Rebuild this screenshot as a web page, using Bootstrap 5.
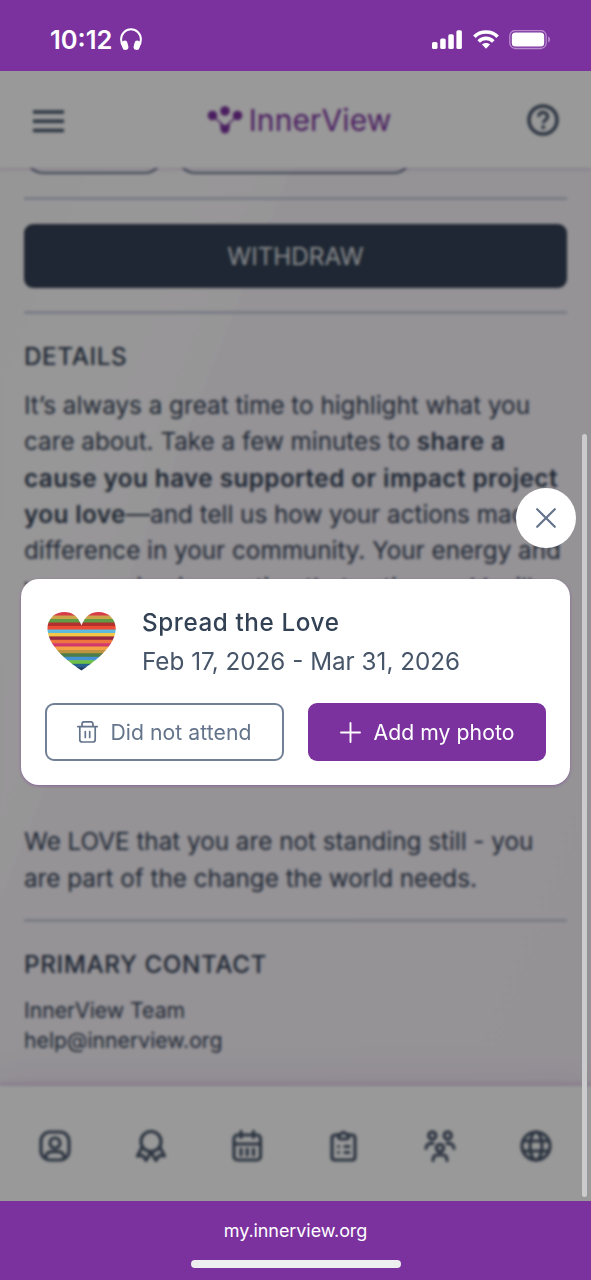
<!DOCTYPE html>
<html lang="en">
<head>
<meta charset="utf-8">
<meta name="viewport" content="width=device-width, initial-scale=1">
<title>InnerView</title>
<link href="https://cdn.jsdelivr.net/npm/bootstrap@5.3.0/dist/css/bootstrap.min.css" rel="stylesheet">
<style>
  body { font-family: Inter, "Liberation Sans", sans-serif; color: #334155; height: 1280px; font-size: 24.24px; line-height: 36.4px; letter-spacing: 0; overflow: hidden; }
  svg { display: block; flex: none; }
  .purple { background: #7b329f; color: #fff; }
  .status { height: 71px; padding: 8px 40px 0 50px; }
  .clock { font-size: 25.5px; font-weight: 600; padding-top: 1px; }
  .screen { height: 1130px; background: linear-gradient(111.7deg, #fbfafb 0, #fdfcfd 20%, #fcfafc 31.3%, #f9f5fb 32%, #f9f4fb 100%); }
  .topbar { height: 97px; padding: 2px 32px 0 33px; background: #fff; box-shadow: 0 1px 4px rgba(123,50,159,.25); z-index: 1; }
  .brand { color: #7b329f; font-size: 30px; letter-spacing: .1px; gap: 6px; margin: -1px 0 0 7px; }
  .chip { height: 44px; margin-top: -38px; border: 2px solid #64748b; border-radius: 20px; }
  .content { padding: 0 24px; }
  .rule { height: 3px; background: #cbd0df; }
  .withdraw { height: 64px; border-radius: 9px; background: #334155; color: #e2e5e9; border: 0; padding: 2px 0 0; }
  .title-sm { font-size: 24.24px; line-height: 36px; font-weight: 500; margin: 0; letter-spacing: .61px; }
  .copy b { font-weight: 600; letter-spacing: .45px; }
  .story { height: 436.4px; }
  .contact { font-size: 21.2px; line-height: 30.3px; }
  .tabs { height: 115px; padding: 5px 7px 0; background: #fff; box-shadow: 0 -2px 5px rgba(123,50,159,.2), 0 -12px 30px rgba(123,50,159,.08); }
  .tabs div { flex: 1; display: flex; justify-content: center; }
  .tabs svg { stroke: #475569; stroke-width: 3.2; fill: none; }
  .scrim { inset: 0; background: rgba(0,0,0,.4); backdrop-filter: blur(1.4px); z-index: 2; }
  .dialog-box { left: 21px; top: 508px; width: 549px; height: 206px; border-radius: 18px; background: #fff; z-index: 3; padding: 24px; box-shadow: 0 1px 3px rgba(123,50,159,.5); }
  .dismiss { width: 60.500px; height: 60.500px; right: -6px; top: -91.500px; border: 0; }
  .dates { color: #475569; }
  .act { height: 58px; border-radius: 9px; font-size: 21.2px; letter-spacing: .06px; width: 238px; }
  .act-out { border: 2px solid #718096; color: #64748b; background: #fff; width: 239px; }
  .thumb { right: 4px; top: 363px; width: 5px; height: 763px; border-radius: 3px; background: #cbcbcd; z-index: 4; }
  .footbar { height: 79px; padding-top: 16px; font-size: 18px; line-height: 28px; letter-spacing: -.08px; }
  .home { width: 210px; height: 8px; border-radius: 4px; background: #eee; margin-top: 15px; }
</style>
</head>
<body class="d-flex flex-column">
<div class="status purple d-flex align-items-center justify-content-between">
  <div class="d-flex align-items-center" style="gap:8px">
    <span class="clock">10:12</span>
    <svg width="22" height="23" viewBox="0 0 22 23" fill="none" stroke="#fff" stroke-width="2"><path d="M3.600 19C1.800 16.600 1.100 14.500 1.100 11.500a9.900 10.200 0 0 1 19.800 0c0 3-.7 5.100-2.500 7.500"/><rect x="3" y="13.600" width="4" height="7.400" rx="2" fill="#fff" transform="rotate(-14 5 17.400)"/><rect x="15" y="13.600" width="4" height="7.400" rx="2" fill="#fff" transform="rotate(14 17 17.400)"/></svg>
  </div>
  <div class="d-flex align-items-center">
    <svg width="30" height="20" viewBox="0 0 30 20" fill="#fff"><rect y="12" width="5.500" height="7" rx="1.600"/><rect x="8.200" y="8.500" width="5.500" height="10.500" rx="1.600"/><rect x="16.300" y="4.300" width="5.500" height="14.700" rx="1.600"/><rect x="24.400" y=".2" width="5.500" height="18.800" rx="1.600"/></svg>
    <svg style="margin-left:9px" width="30" height="20" viewBox="1 0 30 20" fill="none" stroke="#fff" stroke-width="3.600"><path d="M4.400 6.700c6-6.300 17.200-6.300 23.200 0M8.700 11.400c4-4 10.600-4 14.600 0"/><path d="M16 18.800l-4-4.200c2-2 6-2 8 0z" fill="#fff" stroke="none"/></svg>
    <svg style="margin-left:8px" width="42" height="20" viewBox="0 0 42 20"><rect x=".8" y=".5" width="36.400" height="18" rx="5.500" fill="none" stroke="#b98dcd" stroke-width="1.300"/><rect x="2.800" y="2.500" width="32.400" height="14" rx="3.500" fill="#fff"/><path d="M39.200 6.500v6c2.500-1 2.500-5 0-6z" fill="#b98dcd"/></svg>
  </div>
</div>

<div class="screen position-relative overflow-hidden d-flex flex-column">
  <header class="topbar position-relative d-flex align-items-center justify-content-between flex-shrink-0">
    <svg width="31" height="24" viewBox="0 0 31 24" stroke="#475569" stroke-width="3.500"><path d="M0 3h31M0 12.300h31M0 21.500h31"/></svg>
    <div class="brand d-flex align-items-center">
      <svg width="36" height="28" viewBox="0 0 36 28" fill="#7b329f"><circle cx="5.500" cy="9.500" r="4.800"/><circle cx="18" cy="5" r="4.800"/><circle cx="30.500" cy="9.500" r="4.800"/><path d="M5.500 9.500L18 21 30.500 9.500" fill="none" stroke="#7b329f" stroke-width="1.500"/><path d="M13 17.500q5 3 10 0l-.5 5.500q-.8 4.500-4.500 4.500t-4.500-4.500z"/></svg>
      <span>InnerView</span>
    </div>
    <svg style="margin-top:-2px" width="32" height="32" viewBox="0 0 32 32" fill="none" stroke="#475569" stroke-width="3.500"><circle cx="16" cy="16" r="14"/><path d="M11.600 12.700c0-6 9-5.600 9 0 0 3.300-4.300 3.200-4.300 6.600" stroke-width="3.200"/><circle cx="16.200" cy="23.200" r="2" fill="#475569" stroke="none"/></svg>
  </header>

  <main class="content flex-grow-1">
    <div class="d-flex" style="gap:11.500px"><div class="chip" style="width:140px"></div><div class="chip" style="width:237px"></div></div>
    <div class="rule" style="margin-top:23px"></div>
    <button class="withdraw w-100 d-block" style="margin-top:24px">WITHDRAW</button>
    <div class="rule" style="margin-top:23px"></div>
    <h2 class="title-sm" style="margin-top:25px">DETAILS</h2>
    <div class="copy text-nowrap" style="margin-top:12.800px">
      <div class="story">It’s always a great time to highlight what you<br>care about. Take a few minutes to <b>share a</b><br><b>cause you have supported or impact project</b><br><b>you love</b>—and tell us how your actions made a<br>difference in your community. Your energy and<br>your passion in creating that action and I will</div>
      <div>We LOVE that you are not standing still - you<br>are part of the change the world needs.</div>
    </div>
    <div class="rule" style="margin-top:22px"></div>
    <h2 class="title-sm" style="margin-top:25px">PRIMARY CONTACT</h2>
    <div class="contact" style="margin-top:11.500px">InnerView Team<br>help@innerview.org</div>
  </main>

  <nav class="tabs position-relative d-flex align-items-center flex-shrink-0">
    <div><svg width="32" height="32" viewBox="0 0 32 32"><rect x="2" y="2" width="28" height="28" rx="9"/><circle cx="16" cy="13" r="5"/><path d="M6.500 28c1-7 5-6.300 9.500-6.300s8.500-.7 9.500 6.300"/></svg></div>
    <div><svg width="32" height="32" viewBox="0 0 32 32" stroke-linejoin="round"><circle cx="16" cy="11.500" r="10"/><path d="M7.200 17L2.500 26l5.500-.5 3 5L16 22l5 8.500 3-5 5.500.5-4.700-9"/></svg></div>
    <div><svg width="32" height="32" viewBox="0 0 32 32" stroke-linecap="round"><rect x="3" y="5" width="26.500" height="25" rx="3.500"/><path d="M3 14h26.500M10 1.500v6M22.500 1.500v6M10 19v6M16.200 19v6M22.500 19v6"/></svg></div>
    <div><svg width="32" height="32" viewBox="0 0 32 32" stroke-linecap="round"><path d="M10 5H7.500Q4 5 4 8v19q0 3 3 3h17q3 0 3-3V8q0-3-3-3h-3"/><path d="M10.500 4.500h2q3-4.500 6 0h2v2Q20.500 9 18 9h-5q-2.500 0-2.500-2.500zM10.500 16.500h.1M17 16.500h4M10.500 22.500h.1M17 22.500h4"/></svg></div>
    <div><svg width="32" height="32" viewBox="0 0 32 32" stroke-linecap="round"><circle cx="8.300" cy="5.500" r="3.600"/><circle cx="23.700" cy="5.500" r="3.600"/><circle cx="16" cy="18" r="3.600"/><path d="M2 18.500q0-5.500 7-5.200M30 18.500q0-5.500-7-5.200M9 30.500q0-5.500 4-5.500h6q4 0 4 5.500"/></svg></div>
    <div><svg width="32" height="32" viewBox="0 0 32 32"><circle cx="16" cy="16" r="14"/><ellipse cx="16" cy="16" rx="6" ry="14"/><path d="M2.500 11h27M2.500 21h27"/></svg></div>
  </nav>

  <div class="scrim position-absolute"></div>

  <section class="dialog-box position-absolute">
    <button class="dismiss position-absolute rounded-circle bg-white p-0 d-flex align-items-center justify-content-center" aria-label="Close"><svg width="20" height="20" viewBox="0 0 20 20" stroke="#64748b" stroke-width="2.200" stroke-linecap="round"><path d="M1.200 1.200l17.600 17.600M18.800 1.200L1.200 18.800"/></svg></button>
    <div class="d-flex" style="gap:26px">
      <svg style="margin:9px 0 0 2px" width="69" height="59" viewBox="0 0 69 59">
        <defs><clipPath id="heart"><path d="M34.500 13.500C38 4 44 0 51.500 0 61 0 68.700 6.500 68.700 16.500 68.700 33 50 48 34.500 58.500 19 48 .5 33 .5 16.500.5 6.500 8 0 17.500 0 25 0 31 4 34.500 13.500z"/></clipPath></defs>
        <g clip-path="url(#heart)">
          <rect width="69" height="4" fill="#d73b49"/><rect y="3.500" width="69" height="4" fill="#cba34a"/><rect y="7" width="69" height="4" fill="#5f9c45"/><rect y="10.500" width="69" height="4" fill="#b2312f"/><rect y="14" width="69" height="4" fill="#ec4c33"/><rect y="17.500" width="69" height="4" fill="#5fbade"/><rect y="21" width="69" height="4" fill="#f4c746"/><rect y="24.400" width="69" height="4" fill="#952a40"/><rect y="27.800" width="69" height="4" fill="#ef7440"/><rect y="31.200" width="69" height="4" fill="#d1386b"/><rect y="34.500" width="69" height="4" fill="#f3a246"/><rect y="38" width="69" height="4" fill="#bd9240"/><rect y="41.300" width="69" height="4" fill="#4c7d48"/><rect y="44.800" width="69" height="4" fill="#4292d4"/><rect y="48.200" width="69" height="4" fill="#6dc045"/><rect y="51.800" width="69" height="4" fill="#286191"/><rect y="55.200" width="69" height="4" fill="#1f3e66"/>
        </g>
      </svg>
      <div class="text-nowrap" style="padding-top:1.500px">
        <div class="title-sm">Spread the Love</div>
        <div class="dates" style="margin-top:3px">Feb 17, 2026 - Mar 31, 2026</div>
      </div>
    </div>
    <div class="d-flex" style="gap:24px;margin-top:23.500px">
      <button class="act act-out d-flex align-items-center justify-content-center p-0" style="gap:12px"><svg width="21" height="22" viewBox="0 0 21 22" fill="none" stroke="#64748b" stroke-width="1.700" stroke-linecap="round"><path d="M.8 5.700h19.400M5 5.500V3q0-2.200 2.200-2.200h6.600Q16 .8 16 3v2.500M2.800 5.700v13q0 2.300 2.300 2.300h10.800q2.300 0 2.300-2.300v-13M8.300 10.500v6M12.700 10.500v6"/></svg>Did not attend</button>
      <button class="act purple border-0 d-flex align-items-center justify-content-center p-0" style="gap:13px"><svg width="21" height="21" viewBox="0 0 21 21" stroke="#fff" stroke-width="1.900" stroke-linecap="round"><path d="M1 10.500h19M10.500 1v19"/></svg>Add my photo</button>
    </div>
  </section>
  <div class="thumb position-absolute"></div>
</div>

<footer class="footbar purple d-flex flex-column align-items-center">
  <div>my.innerview.org</div>
  <div class="home"></div>
</footer>
<script src="https://cdn.jsdelivr.net/npm/bootstrap@5.3.0/dist/js/bootstrap.bundle.min.js"></script>
</body>
</html>
